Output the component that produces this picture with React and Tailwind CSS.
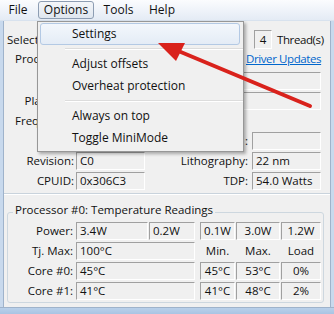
import React from "react";

const F = "font-['Open_Sans',sans-serif]";
const box =
  "h-[18px] border border-t-[#a0a0a0] border-l-[#a0a0a0] border-b-[#ffffff] border-r-[#ffffff] flex items-center";

function Field({ w, children, center }) {
  return (
    <div className={`${box} ${w} ${center ? "justify-center" : "pl-[3px]"} overflow-hidden whitespace-nowrap`}>
      {children}
    </div>
  );
}

function Label({ w, children }) {
  return <div className={`${w} text-right whitespace-nowrap`}>{children}</div>;
}

function MenuItem({ children, active }) {
  return (
    <div
      className={`ml-[2px] mr-[3px] h-[22px] flex items-center pl-[31px] rounded-[3px] border text-[12px] ${
        active
          ? "border-[#b3c9e4] bg-gradient-to-b from-[#f3f7fc] to-[#e4ecf6]"
          : "border-transparent"
      }`}
    >
      {children}
    </div>
  );
}

function Sep() {
  return (
    <div className="h-[8px] flex items-center pl-[27px]">
      <div className="w-full h-[2px] border-t border-t-[#dcdcdc] border-b border-b-[#ffffff]" />
    </div>
  );
}

export default function App() {
  return (
    <div className={`relative w-[334px] h-[314px] overflow-hidden bg-[#f0f0f0] text-[11.5px] text-[#111] ${F}`}>
      {/* menubar */}
      <div className="flex items-center h-[21px] text-[12px] bg-gradient-to-b from-[#fbfcfe] to-[#e4ebf5] border-b border-b-[#d8e2ee]">
        <div className="ml-[2px] w-[32px] h-[18px] flex items-center justify-center">File</div>
        <div className="ml-[4px] w-[56px] h-[18px] flex items-center justify-center rounded-[3px] border border-[#8d9db3] bg-gradient-to-b from-[#f4f6f9] to-[#dfe6ef]">
          Options
        </div>
        <div className="ml-[2px] w-[45px] h-[18px] flex items-center justify-center">Tools</div>
        <div className="ml-[2px] w-[38px] h-[18px] flex items-center justify-center">Help</div>
      </div>

      {/* body */}
      <div className="flex h-[286px]">
        <div className="w-[4px] bg-[#c8d9ed] border-r border-r-[#9fb3cb]" />
        <div className="w-[326px] flex flex-col">
          {/* select row */}
          <div className="flex items-center h-[19px] mt-[9px]">
            <div className="ml-[3px] w-[62px] whitespace-nowrap">Select CPU:</div>
            <div className={`${box} ml-[3px] w-[90px] h-[19px] pl-[3px]`}></div>
            <div className={`${box} ml-[8px] w-[18px] h-[19px] justify-center`}></div>
            <div className="ml-[6px] w-[60px]"></div>
            <div className={`${box} w-[18px] h-[19px] justify-center`}>4</div>
            <div className="ml-[5px] whitespace-nowrap tracking-[-0.4px]">Thread(s)</div>
          </div>
          {/* processor info header */}
          <div className="flex items-center h-[18px] mt-[1px] pl-[11px]">
            <span className="w-[26px] overflow-hidden whitespace-nowrap">Processor Information</span>
            <span className="ml-[205px] text-[#0066cc] underline whitespace-nowrap tracking-[-0.4px]">Driver Updates</span>
          </div>
          <div className="flex flex-col gap-[2px] mt-[4px]">
            <div className="flex items-center h-[18px]">
              <Label w="w-[70px] mr-[2px]">Model:</Label>
              <Field w="w-[245px]"></Field>
            </div>
            <div className="flex items-center h-[18px]">
              <Label w="w-[70px] mr-[2px]">Platform:</Label>
              <Field w="w-[245px]"></Field>
            </div>
            <div className="flex items-center h-[18px]">
              <Label w="w-[70px] mr-[2px]">Frequency:</Label>
              <Field w="w-[160px]"></Field>
            </div>
            <div className="flex items-center h-[18px]">
              <Label w="w-[70px] mr-[2px]">VID:</Label>
              <Field w="w-[69px]"></Field>
              <Label w="w-[103px]">:</Label>
              <div className="ml-[4px]">
                <Field w="w-[69px]"></Field>
              </div>
            </div>
            <div className="flex items-center h-[18px]">
              <Label w="w-[70px] mr-[2px]">Revision:</Label>
              <Field w="w-[69px]">C0</Field>
              <Label w="w-[103px]">Lithography:</Label>
              <div className="ml-[4px]">
                <Field w="w-[69px]">22 nm</Field>
              </div>
            </div>
            <div className="flex items-center h-[18px]">
              <Label w="w-[70px] mr-[2px]">CPUID:</Label>
              <Field w="w-[69px]">0x306C3</Field>
              <Label w="w-[103px]">TDP:</Label>
              <div className="ml-[4px]">
                <Field w="w-[69px]">54.0 Watts</Field>
              </div>
            </div>
          </div>
          {/* separator */}
          <div className="mt-[3px] h-[2px] border-t border-t-[#c9d3dc] border-b border-b-[#ffffff]" />

          {/* temperature group */}
          <div className="relative ml-[3px] mt-[17px] w-[317px] h-[91px] border border-[#cdd7df] rounded-[3px] pt-[9px]">
            <div className="absolute top-[-12px] left-[5px] px-[2px] bg-[#f0f0f0] leading-[18px] whitespace-nowrap">
              Processor #0: Temperature Readings
            </div>
            <div className="flex flex-col gap-[2px]">
              <div className="flex items-center h-[18px]">
                <Label w="w-[65px] mr-[3px]">Power:</Label>
                <Field w="w-[72px]">3.4W</Field>
                <div className="ml-[1px]"><Field w="w-[46px]">0.2W</Field></div>
                <div className="ml-[5px]"><Field w="w-[35px]" center>0.1W</Field></div>
                <div className="ml-[1px]"><Field w="w-[44px]" center>3.0W</Field></div>
                <div className="ml-[1px]"><Field w="w-[40px]" center>1.2W</Field></div>
              </div>
              <div className="flex items-center h-[18px]">
                <Label w="w-[65px] mr-[3px]">Tj. Max:</Label>
                <Field w="w-[119px]">100°C</Field>
                <div className="ml-[5px] w-[35px] text-center">Min.</div>
                <div className="ml-[1px] w-[44px] text-center">Max.</div>
                <div className="ml-[1px] w-[40px] text-center">Load</div>
              </div>
              <div className="flex items-center h-[18px]">
                <Label w="w-[65px] mr-[3px]">Core #0:</Label>
                <Field w="w-[119px]">45°C</Field>
                <div className="ml-[5px]"><Field w="w-[35px]" center>45°C</Field></div>
                <div className="ml-[1px]"><Field w="w-[44px]" center>53°C</Field></div>
                <div className="ml-[1px]"><Field w="w-[40px]" center>0%</Field></div>
              </div>
              <div className="flex items-center h-[18px]">
                <Label w="w-[65px] mr-[3px]">Core #1:</Label>
                <Field w="w-[119px]">41°C</Field>
                <div className="ml-[5px]"><Field w="w-[35px]" center>41°C</Field></div>
                <div className="ml-[1px]"><Field w="w-[44px]" center>48°C</Field></div>
                <div className="ml-[1px]"><Field w="w-[40px]" center>2%</Field></div>
              </div>
            </div>
          </div>
        </div>
        <div className="w-[4px] bg-[#c8d9ed] border-l border-l-[#9fb3cb]" />
      </div>
      <div className="h-[7px] bg-gradient-to-b from-[#b9d0ea] to-[#a9c4e3] border-t border-t-[#9fb3cb]" />

      {/* dropdown menu */}
      <div className="absolute left-[37px] top-[21px] w-[207px] h-[131px] border border-[#979797] bg-[#f0f0f0] pt-[1px] shadow-[2px_2px_3px_rgba(0,0,0,0.3)]">
        <MenuItem active>Settings</MenuItem>
        <Sep />
        <MenuItem>Adjust offsets</MenuItem>
        <MenuItem>Overheat protection</MenuItem>
        <Sep />
        <MenuItem>Always on top</MenuItem>
        <MenuItem>Toggle MiniMode</MenuItem>
      </div>

      {/* red arrow annotation */}
      <svg className="absolute left-0 top-0 pointer-events-none" width="334" height="314" viewBox="0 0 334 314">
        <line x1="310" y1="106" x2="176" y2="50" stroke="#d9221c" strokeWidth="4" strokeLinecap="round" />
        <polygon points="158,43 185,43 176,61" fill="#d9221c" />
      </svg>
    </div>
  );
}
